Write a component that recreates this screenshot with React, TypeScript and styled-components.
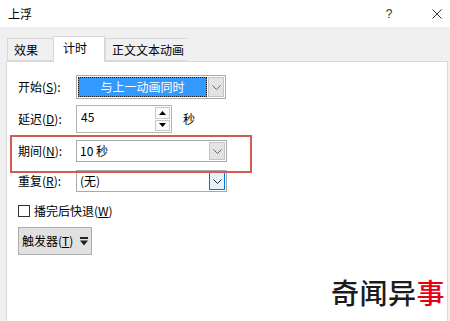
import React from "react";
import styled, { createGlobalStyle } from "styled-components";

const FONT = `"Noto Sans CJK SC", "Noto Sans", sans-serif`;

const GlobalStyle = createGlobalStyle`
  html, body {
    margin: 0;
    padding: 0;
    background: #ffffff;
  }
  body {
    font-family: ${FONT};
    font-size: 12px;
    color: #000000;
  }
  * {
    box-sizing: border-box;
  }
`;

const Dialog = styled.div`
  position: relative;
  width: 450px;
  height: 321px;
  display: flex;
  flex-direction: column;
  background: #f0f0f0;
  overflow: hidden;
`;

const TitleBar = styled.div`
  height: 27px;
  display: flex;
  align-items: center;
  background: #ffffff;
  padding-left: 8px;
`;

const TitleText = styled.div`
  flex: 1;
  line-height: 14px;
`;

const TitleButton = styled.div<{ width: number }>`
  width: ${p => p.width}px;
  height: 27px;
  display: flex;
  align-items: center;
  justify-content: center;
  color: #333333;
  font-family: "Liberation Sans", sans-serif;
  font-size: 12px;
`;

const TabStrip = styled.div`
  height: 34px;
  display: flex;
  align-items: flex-end;
  padding-left: 7px;
`;

const Tab = styled.div<{ width: number; active?: boolean }>`
  position: relative;
  z-index: ${p => (p.active ? 2 : 1)};
  width: ${p => p.width}px;
  height: ${p => (p.active ? 26 : 23)}px;
  margin-bottom: ${p => (p.active ? -1 : 0)}px;
  display: flex;
  align-items: center;
  padding: 0 0 ${p => (p.active ? 3 : 0)}px ${p => (p.active ? 9 : 6)}px;
  background: ${p => (p.active ? "#ffffff" : "#f0f0f0")};
  border: 1px solid #d9d9d9;
  border-bottom: ${p => (p.active ? "none" : "1px solid #d9d9d9")};
  border-right: ${p => (p.active ? "1px solid #d9d9d9" : "none")};
  line-height: 14px;
`;

const Panel = styled.div`
  position: relative;
  flex: 1;
  margin: 0 2px 0 6px;
  background: #ffffff;
  border: 1px solid #d9d9d9;
  border-bottom: none;
  padding: 13px 0 0 11px;
  display: flex;
  flex-direction: column;
`;

const Row = styled.div<{ height: number; top: number }>`
  display: flex;
  align-items: center;
  height: ${p => p.height}px;
  margin-top: ${p => p.top}px;
`;

const Label = styled.div`
  width: 58px;
  flex-shrink: 0;
  line-height: 14px;
`;

const Key = styled.span`
  text-decoration: underline;
  text-underline-offset: 1px;
`;

const Combo = styled.div<{ width: number }>`
  width: ${p => p.width}px;
  height: 100%;
  display: flex;
  align-items: stretch;
  padding: 1px;
  gap: 1px;
  background: #ffffff;
  border: 1px solid #a9a9a9;
`;

const ComboValue = styled.div<{ selected?: boolean }>`
  flex: 1;
  display: flex;
  align-items: center;
  justify-content: ${p => (p.selected ? "center" : "flex-start")};
  padding-left: ${p => (p.selected ? 0 : 2)}px;
  background: ${p => (p.selected ? "#3399ff" : "transparent")};
  color: ${p => (p.selected ? "#ffffff" : "#000000")};
  outline: ${p => (p.selected ? "1px dotted #1a1a1a" : "none")};
  outline-offset: -1px;
  line-height: 14px;
`;

const DropButton = styled.div<{ hot?: boolean }>`
  width: 16px;
  display: flex;
  align-items: center;
  justify-content: center;
  background: ${p => (p.hot ? "#e5f1fb" : "#e3e3e3")};
  border: 1px solid ${p => (p.hot ? "#0078d7" : "#c4c4c4")};
`;

const SpinInput = styled.div`
  width: 96px;
  height: 100%;
  display: flex;
  align-items: stretch;
  padding: 1px;
  border: 1px solid #b4b4b4;
  background: #ffffff;
`;

const SpinValue = styled.div`
  flex: 1;
  padding: 3px 0 0 3px;
  line-height: 14px;
`;

const SpinButtons = styled.div`
  width: 15px;
  display: flex;
  flex-direction: column;
  gap: 1px;
`;

const SpinButton = styled.div`
  flex: 1;
  display: flex;
  align-items: center;
  justify-content: center;
  border: 1px solid #c8c8c8;
  background: #fbfbfb;
`;

const Unit = styled.div`
  margin-left: 11px;
  line-height: 14px;
`;

const Highlight = styled.div`
  position: absolute;
  left: 3px;
  top: 73px;
  width: 242px;
  height: 38px;
  border: 2px solid #cf5d54;
  pointer-events: none;
`;

const CheckBox = styled.div`
  width: 12px;
  height: 12px;
  border: 1px solid #333333;
  background: #ffffff;
  margin-right: 4px;
`;

const CheckLabel = styled.div`
  line-height: 14px;
`;

const TriggerButton = styled.div`
  width: 74px;
  height: 28px;
  margin-top: 8px;
  display: flex;
  align-items: center;
  padding-left: 3px;
  gap: 7px;
  background: #e1e1e1;
  border: 1px solid #adadad;
  line-height: 14px;
`;

const Watermark = styled.div`
  position: absolute;
  left: 331px;
  top: 276px;
  font-family: ${FONT};
  font-size: 28px;
  line-height: 32px;
  font-weight: 500;
  color: #1c1c1c;
  letter-spacing: 0.5px;
  white-space: nowrap;
`;

const Red = styled.span`
  color: #e60012;
`;

const Chevron = ({ color }: { color: string }) => (
  <svg width="9" height="5" viewBox="0 0 9 5">
    <path d="M0.5 0.5 L4.5 4.5 L8.5 0.5" fill="none" stroke={color} strokeWidth="1" />
  </svg>
);

const Arrow = ({ up }: { up?: boolean }) => (
  <svg width="7" height="4" viewBox="0 0 7 4">
    <path d={up ? "M0 4 L3.5 0 L7 4 Z" : "M0 0 L3.5 4 L7 0 Z"} fill="#000" />
  </svg>
);

const DropMark = () => (
  <svg width="8" height="10" viewBox="0 0 8 10">
    <rect x="0" y="1" width="8" height="2" fill="#222" />
    <path d="M0 4.5 L8 4.5 L4 9.5 Z" fill="#222" />
  </svg>
);

export default function App() {
  return (
    <>
      <GlobalStyle />
      <Dialog>
        <TitleBar>
          <TitleText>上浮</TitleText>
          <TitleButton width={24}>?</TitleButton>
          <TitleButton width={23} />
          <TitleButton width={26}>
            <svg width="10" height="10" viewBox="0 0 10 10">
              <path d="M0.5 0.5 L9.5 9.5 M9.5 0.5 L0.5 9.5" stroke="#333" strokeWidth="1" />
            </svg>
          </TitleButton>
        </TitleBar>

        <TabStrip>
          <Tab width={46}>效果</Tab>
          <Tab width={52} active>
            计时
          </Tab>
          <Tab width={82}>正文文本动画</Tab>
        </TabStrip>

        <Panel>
          <Row height={24} top={0}>
            <Label>
              开始(<Key>S</Key>):
            </Label>
            <Combo width={150}>
              <ComboValue selected>与上一动画同时</ComboValue>
              <DropButton>
                <Chevron color="#666" />
              </DropButton>
            </Combo>
          </Row>

          <Row height={28} top={6}>
            <Label>
              延迟(<Key>D</Key>):
            </Label>
            <SpinInput>
              <SpinValue>45</SpinValue>
              <SpinButtons>
                <SpinButton>
                  <Arrow up />
                </SpinButton>
                <SpinButton>
                  <Arrow />
                </SpinButton>
              </SpinButtons>
            </SpinInput>
            <Unit>秒</Unit>
          </Row>

          <Row height={22} top={7}>
            <Label>
              期间(<Key>N</Key>):
            </Label>
            <Combo width={151}>
              <ComboValue>10 秒</ComboValue>
              <DropButton>
                <Chevron color="#666" />
              </DropButton>
            </Combo>
          </Row>

          <Row height={22} top={8}>
            <Label>
              重复(<Key>R</Key>):
            </Label>
            <Combo width={151}>
              <ComboValue>(无)</ComboValue>
              <DropButton hot>
                <Chevron color="#222" />
              </DropButton>
            </Combo>
          </Row>

          <Row height={16} top={11}>
            <CheckBox />
            <CheckLabel>
              播完后快退(<Key>W</Key>)
            </CheckLabel>
          </Row>

          <TriggerButton>
            <span>
              触发器(<Key>T</Key>)
            </span>
            <DropMark />
          </TriggerButton>

          <Highlight />
        </Panel>

        <Watermark>
          奇闻异<Red>事</Red>
        </Watermark>
      </Dialog>
    </>
  );
}
